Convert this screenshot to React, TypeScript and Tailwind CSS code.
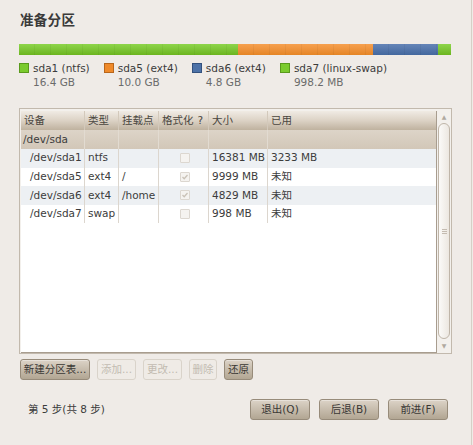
import React from "react";

const font = "font-['DejaVu_Sans','Noto_Sans_CJK_SC',sans-serif]";

function Check({ on }: { on: boolean }) {
  return (
    <div className="w-[10px] h-[10px] border border-[#dcd7d0] bg-[#f5f3f0] rounded-[1px] flex items-center justify-center">
      {on && (
        <svg width="8" height="8" viewBox="0 0 8 8">
          <path d="M1.5 4 L3.2 5.8 L6.5 2" stroke="#c9c2b7" strokeWidth="1.3" fill="none" />
        </svg>
      )}
    </div>
  );
}

const cols = ["w-[64px]", "w-[34px]", "w-[40px]", "w-[50px]", "w-[59px]", "flex-1"];

function Row({ cells, bg, fmt, indent }: { cells: string[]; bg: string; fmt: number; indent?: boolean }) {
  return (
    <div className={`flex h-[18.6px] items-center ${bg}`}>
      {cells.map((c, i) => (
        <div
          key={i}
          className={`${cols[i]} h-full flex items-center ${i < 5 ? "border-r border-[#dcd6ce]" : ""} ${
            i === 0 && indent ? "pl-[9px]" : "pl-[3px]"
          } ${i === 3 ? "justify-center pl-0" : ""}`}
        >
          {i === 3 && fmt >= 0 ? <Check on={fmt === 1} /> : c}
        </div>
      ))}
    </div>
  );
}

function SegBar() {
  const tex =
    "bg-[repeating-linear-gradient(90deg,transparent_0px,transparent_15px,rgba(0,0,0,0.045)_15px,rgba(0,0,0,0.045)_16px)]";
  return (
    <div className="flex h-[11px] w-[432px] overflow-hidden">
      <div className="w-[219px] h-full bg-gradient-to-b from-[#8ed54a] to-[#6cb51f] relative">
        <div className={`absolute inset-0 ${tex}`} />
      </div>
      <div className="w-[135px] h-full bg-gradient-to-b from-[#f6a04e] to-[#e58525] relative">
        <div className={`absolute inset-0 ${tex}`} />
      </div>
      <div className="w-[65px] h-full bg-gradient-to-b from-[#6585b8] to-[#44689e] relative">
        <div className={`absolute inset-0 ${tex}`} />
      </div>
      <div className="flex-1 h-full bg-gradient-to-b from-[#8ed54a] to-[#6cb51f]" />
    </div>
  );
}

function Legend({ color, name, size }: { color: string; name: string; size: string }) {
  return (
    <div className="flex gap-[4px]">
      <div className={`w-[10px] h-[10px] mt-[2px] border ${color}`} />
      <div className="flex flex-col leading-[14px]">
        <span className="text-[#3c3c3c]">{name}</span>
        <span className="text-[#6b6b6b]">{size}</span>
      </div>
    </div>
  );
}

function Btn({ label, w, disabled }: { label: string; w: string; disabled?: boolean }) {
  return (
    <div
      className={`${w} h-[21px] rounded-[3px] border flex items-center justify-center ${
        disabled
          ? "border-[#d9d3ca] bg-[#efebe6] text-[#c2bbb1]"
          : "border-[#978b7a] bg-gradient-to-b from-[#dcd3c7] to-[#b2a693] text-[#3a3835] shadow-[inset_0_1px_0_rgba(255,255,255,0.35)]"
      }`}
    >
      {label}
    </div>
  );
}

export default function App() {
  const headers: React.ReactNode[] = [
    "设备",
    "类型",
    "挂载点",
    <span key="f">
      格式化<span className="ml-[4px]">?</span>
    </span>,
    "大小",
    "已用",
  ];
  return (
    <div className={`w-[473px] h-[445px] bg-[#efebe7] ${font} text-[10.5px] text-[#3c3c3c] flex`}>
      <div className="w-[471px] flex flex-col pl-[19px]">
        <div className="pt-[11px] pl-[1px] text-[13.5px] font-bold text-[#3a3a3a] leading-[18px] tracking-[0.3px]">
          准备分区
        </div>
        <div className="mt-[15px]">
          <SegBar />
        </div>
        <div className="flex gap-[14px] mt-[6px]">
          <Legend color="bg-[#7bcb2e] border-[#5a9a1c]" name="sda1 (ntfs)" size="16.4 GB" />
          <Legend color="bg-[#ef8a2a] border-[#b8661b]" name="sda5 (ext4)" size="10.0 GB" />
          <Legend color="bg-[#4d72a8] border-[#33517e]" name="sda6 (ext4)" size="4.8 GB" />
          <Legend color="bg-[#7bcb2e] border-[#5a9a1c]" name="sda7 (linux-swap)" size="998.2 MB" />
        </div>
        <div className="mt-[19px] w-[433px] h-[246px] border border-[#c2b9ad] flex bg-[#f3f0ec]">
          <div className="flex-1 bg-white border-r border-b border-[#a89d8f] mt-[2px] ml-[1px] flex flex-col">
            <div className="flex h-[19px] items-center bg-gradient-to-b from-[#f0ebe4] via-[#dcd2c5] to-[#bfb29f] text-[#4a4640]">
              {headers.map((h, i) => (
                <div
                  key={i}
                  className={`${cols[i]} h-full flex items-center pl-[3px] ${
                    i < 5 ? "border-r border-[#d3c9bb]" : ""
                  }`}
                >
                  {h}
                </div>
              ))}
            </div>
            <div className="flex h-[19px] items-center bg-gradient-to-b from-[#ddd4c8] to-[#d2c7b8]">
              {["/dev/sda", "", "", "", "", ""].map((c, i) => (
                <div
                  key={i}
                  className={`${cols[i]} h-full flex items-center pl-[2px] ${
                    i < 5 ? "border-r border-[#e2dbd1]" : ""
                  }`}
                >
                  {c}
                </div>
              ))}
            </div>
            <Row cells={["/dev/sda1", "ntfs", "", "", "16381 MB", "3233 MB"]} bg="bg-[#edf0f3]" fmt={0} indent />
            <Row cells={["/dev/sda5", "ext4", "/", "", "9999 MB", "未知"]} bg="bg-white" fmt={1} indent />
            <Row cells={["/dev/sda6", "ext4", "/home", "", "4829 MB", "未知"]} bg="bg-[#edf0f3]" fmt={1} indent />
            <Row cells={["/dev/sda7", "swap", "", "", "998 MB", "未知"]} bg="bg-white" fmt={0} indent />
          </div>
          <div className="w-[14px] flex flex-col items-center pt-[4px] pb-[3px]">
            <div className="text-[6px] leading-[8px] text-[#b0a99f]">▲</div>
            <div className="flex-1 w-[12px] mt-[2px] mb-[3px] rounded-full border border-[#bfb5a8] bg-gradient-to-r from-[#fbfaf8] to-[#ece7e0] flex items-center justify-center">
              <div className="flex flex-col gap-[1px]">
                <div className="w-[5px] h-[1px] bg-[#c4bbb0]" />
                <div className="w-[5px] h-[1px] bg-[#c4bbb0]" />
                <div className="w-[5px] h-[1px] bg-[#c4bbb0]" />
              </div>
            </div>
            <div className="text-[6px] leading-[8px] text-[#b0a99f]">▼</div>
          </div>
        </div>
        <div className="flex gap-[7px] mt-[5px] pl-[1px]">
          <Btn label="新建分区表..." w="w-[70px]" />
          <Btn label="添加..." w="w-[39px]" disabled />
          <Btn label="更改..." w="w-[39px]" disabled />
          <Btn label="删除" w="w-[28px]" disabled />
          <Btn label="还原" w="w-[29px]" />
        </div>
        <div className="flex items-center mt-[19px]">
          <div className="pl-[9px] flex-1">第 5 步(共 8 步)</div>
          <div className="flex gap-[9px] mr-[23px]">
            <Btn label="退出(Q)" w="w-[60px]" />
            <Btn label="后退(B)" w="w-[60px]" />
            <Btn label="前进(F)" w="w-[60px]" />
          </div>
        </div>
      </div>
      <div className="w-[1px] h-full bg-[#d6cfc6]" />
    </div>
  );
}
